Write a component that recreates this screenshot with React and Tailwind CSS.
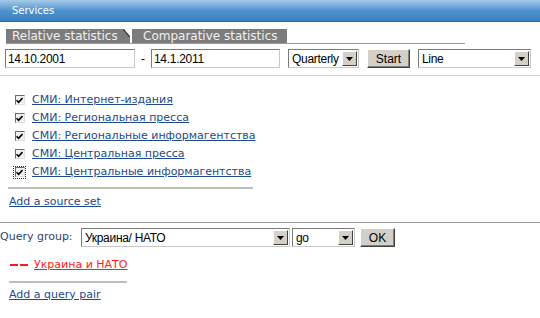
import React from 'react'

const sans = "font-['Liberation_Sans',Arial,sans-serif]"

const Arrow = () => (
    <span className="flex h-[15px] w-[15px] shrink-0 items-center justify-center border border-t-white border-l-white border-b-[#404040] border-r-[#404040] bg-[#d4d0c8]">
        <svg width="7" height="4" viewBox="0 0 7 4"><path d="M0 0h7L3.5 4z" fill="#000" /></svg>
    </span>
)

const Field = ({ value, className = '' }) => (
    <div className={`flex h-[19px] items-center border border-t-[#7a7a7a] border-l-[#7a7a7a] border-b-[#c8c8c8] border-r-[#c8c8c8] bg-white pl-[2px] text-[12px] tracking-[-0.3px] text-black ${sans} ${className}`}>
        {value}
    </div>
)

const Select = ({ value, className = '' }) => (
    <div className={`flex h-[19px] items-center justify-between border border-t-[#7a7a7a] border-l-[#7a7a7a] border-b-[#c8c8c8] border-r-[#c8c8c8] bg-white pl-[3px] pr-px text-[12px] tracking-[-0.3px] text-black ${sans} ${className}`}>
        <span>{value}</span>
        <Arrow />
    </div>
)

const Button = ({ label, className = '' }) => (
    <div className={`flex h-[19px] items-center justify-center border border-t-white border-l-white border-b-[#404040] border-r-[#404040] bg-[#d4d0c8] text-[12px] text-black shadow-[inset_-1px_-1px_0_#808080] ${sans} ${className}`}>
        {label}
    </div>
)

const Check = ({ focus }) => (
    <span className={`flex h-[11px] w-[11px] items-center justify-center ${focus ? 'outline outline-1 outline-dotted outline-[#333]' : ''}`}>
        <span className="flex h-[10px] w-[10px] items-center justify-center border border-t-[#6a6a6a] border-l-[#6a6a6a] border-b-[#e0e0e0] border-r-[#e0e0e0] bg-[#f2f2f2]">
            <svg width="7" height="7" viewBox="0 0 7 7"><path d="M0.5 3.2L2.6 5.4L6.5 1" stroke="#000" strokeWidth="1.6" fill="none" /></svg>
        </span>
    </span>
)

const sources = [
    "СМИ: Интернет-издания",
    "СМИ: Региональная пресса",
    "СМИ: Региональные информагентства",
    "СМИ: Центральная пресса",
    "СМИ: Центральные информагентства",
]

export default function App() {
    return (
        <div className="h-[318px] w-[540px] overflow-hidden bg-white font-['DejaVu_Sans',Verdana,sans-serif] text-[11px]">
            <div className="flex h-[22px] items-center border-b border-[#2e69a3] bg-gradient-to-b from-[#a6cbea] via-[#4f93cf] to-[#3a7fc0] pl-[12px] text-[10px] text-white">
                Services
            </div>

            <div className="ml-[6px] mt-[7px] flex w-[459px] border-b border-[#9a9a9a]">
                <div className="relative flex h-[14px] w-[124px] items-center bg-[#7c7c7c] pl-[6px] text-[12px] text-[#f0f0f0]">
                    Relative statistics
                    <svg className="absolute right-0 top-0" width="7" height="8" viewBox="0 0 7 8">
                        <path d="M0 0h7v8z" fill="#fff" />
                        <path d="M0 0L7 8" stroke="#3c3c3c" strokeWidth="1.4" />
                    </svg>
                </div>
                <div className="ml-[2px] flex h-[14px] w-[155px] items-center bg-[#7c7c7c] pl-[11px] text-[12px] text-[#f0f0f0]">
                    Comparative statistics
                </div>
            </div>

            <div className="ml-[5px] mt-[5px] flex items-center">
                <Field value="14.10.2001" className="w-[130px]" />
                <span className={`mx-[6px] text-[12px] ${sans}`}>-</span>
                <Field value="14.1.2011" className="w-[129px]" />
                <Select value="Quarterly" className="ml-[8px] w-[71px]" />
                <Button label="Start" className="ml-[8px] w-[43px]" />
                <Select value="Line" className="ml-[8px] w-[113px]" />
            </div>

            <div className="mt-[7px] h-px bg-[#cfcfcf]" />

            <div className="pt-[15px]">
                {sources.map((s, i) => (
                    <div key={s} className="flex h-[18px] items-center pl-[14px]">
                        <Check focus={i === sources.length - 1} />
                        <a className="ml-[7px] text-[#1d4a8c] underline">{s}</a>
                    </div>
                ))}
            </div>

            <div className="ml-[8px] mt-[6px] h-[2px] w-[245px] bg-[#bdbdbd]" />
            <div className="mt-[4px] flex h-[18px] items-center pl-[9px]">
                <a className="text-[#1d4a8c] underline">Add a source set</a>
            </div>

            <div className="mt-[11px] h-px bg-[#9a9a9a]" />

            <div className="mt-[5px] flex items-center">
                <span className="w-[81px] text-[#2b4670]">Query group:</span>
                <Select value="Украина/ НАТО" className="w-[209px]" />
                <Select value="go" className="ml-[2px] w-[63px]" />
                <Button label="OK" className="ml-[5px] w-[35px]" />
            </div>

            <div className="mt-[9px] flex h-[18px] items-center pl-[10px] text-[#ff1a1a]">
                <span className="mr-[4px] h-[2px] w-[20px] bg-[repeating-linear-gradient(90deg,#ff1a1a_0_8px,transparent_8px_10px)]" />
                <a className="underline">Украина и НАТО</a>
            </div>

            <div className="ml-[9px] mt-[7px] h-[2px] w-[118px] bg-[#bdbdbd]" />
            <div className="mt-[3px] flex h-[18px] items-center pl-[9px]">
                <a className="text-[#1d4a8c] underline">Add a query pair</a>
            </div>
        </div>
    )
}
